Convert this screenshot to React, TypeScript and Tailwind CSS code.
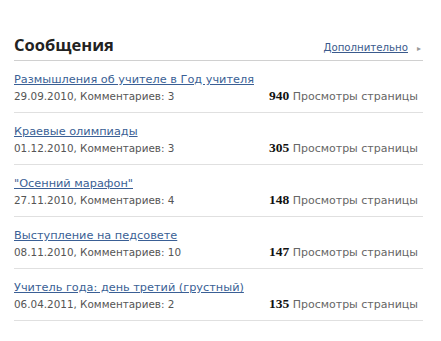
import React from "react";

const posts = [
  { title: "Размышления об учителе в Год учителя", date: "29.09.2010", comments: 3, views: 940 },
  { title: "Краевые олимпиады", date: "01.12.2010", comments: 3, views: 305 },
  { title: "\"Осенний марафон\"", date: "27.11.2010", comments: 4, views: 148 },
  { title: "Выступление на педсовете", date: "08.11.2010", comments: 10, views: 147 },
  { title: "Учитель года: день третий (грустный)", date: "06.04.2011", comments: 2, views: 135 },
];

export default function App() {
  return (
    <div className="w-[441px] h-[341px] bg-white pl-[14px] pt-[33px]" style={{ fontFamily: '"DejaVu Sans", Verdana, sans-serif' }}>
      <div className="w-[409px]">
        <div className="flex items-baseline justify-between border-b border-[#d0d0d0] pb-[3px]">
          <h2 className="text-[16.5px] leading-[24px] font-bold text-[#222]" style={{ fontFamily: '"Open Sans", sans-serif' }}>
            Сообщения
          </h2>
          <a className="text-[10.2px] text-[#3a5a8c] pr-[2px]" href="#">
            <span className="underline">Дополнительно</span>
            <span className="text-[#999] text-[8px] ml-[9px]">▸</span>
          </a>
        </div>
        {posts.map((p) => (
          <div key={p.title} className="border-b border-[#e0e0e0] pt-[8px] pb-[7px]">
            <div className="h-[18px] leading-[18px]">
              <a href="#" className="text-[11.3px] text-[#3a5f95] underline">
                {p.title}
              </a>
            </div>
            <div className="flex h-[18px] justify-between items-baseline leading-[18px] pr-[5px]">
              <span className="text-[10.4px] text-[#555]">
                {p.date}, Комментариев: {p.comments}
              </span>
              <span className="text-[11px] text-[#666]">
                <b className="text-[13.5px] leading-[10px] text-[#111]" style={{ fontFamily: '"Liberation Serif", serif' }}>{p.views}</b> Просмотры страницы
              </span>
            </div>
          </div>
        ))}
      </div>
    </div>
  );
}
